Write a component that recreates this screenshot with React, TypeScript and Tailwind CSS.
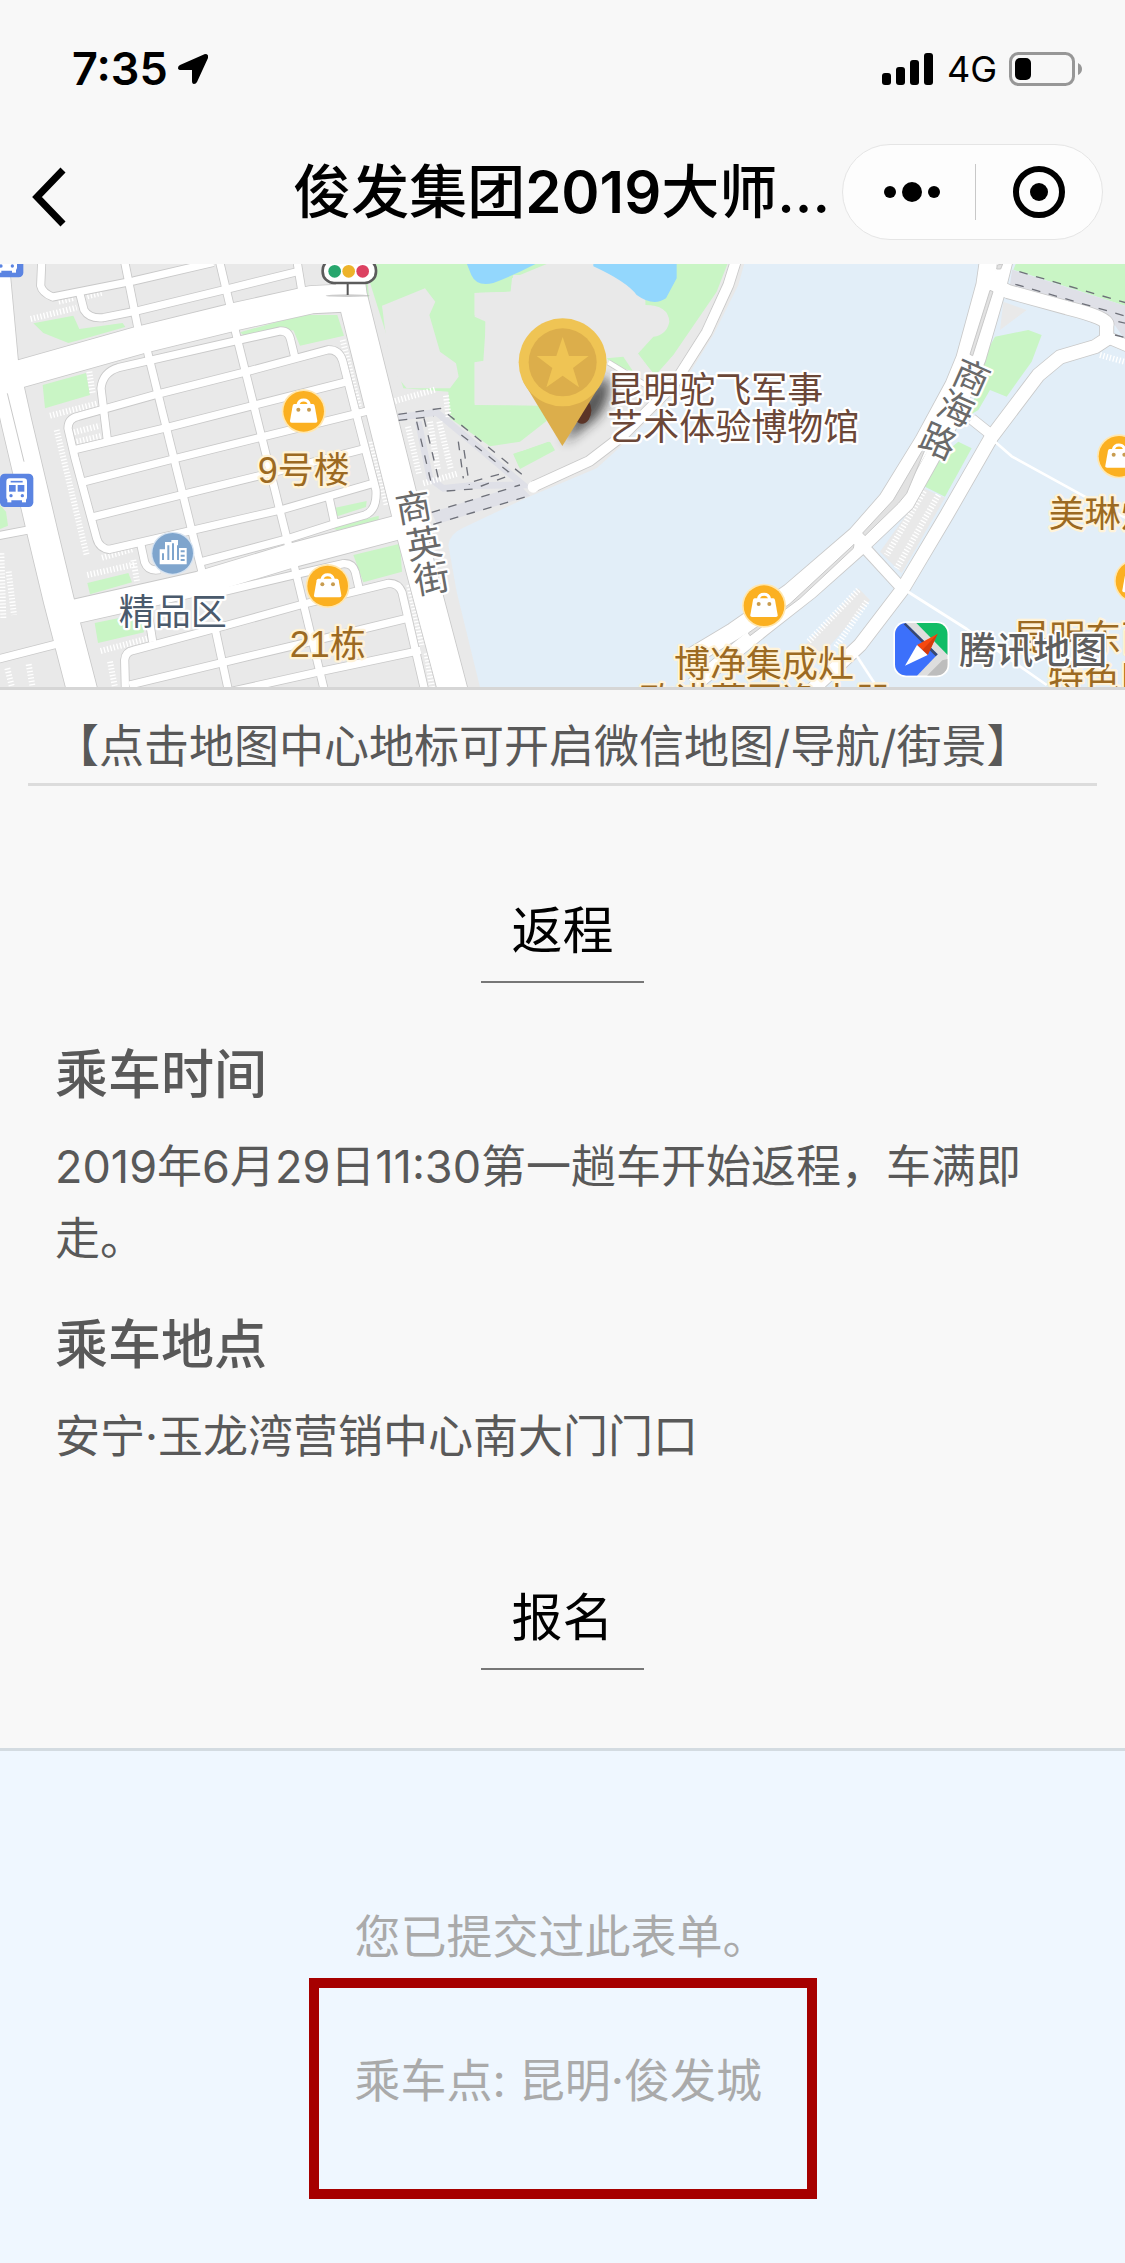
import React from 'react';

type Point = [number, number];

interface Road {
  d: string;
  width: number;
}

const SANS = 'font-[Inter,"Noto_Sans_CJK_SC",sans-serif]';
const MAP_FONT = 'font-["Liberation_Sans","Noto_Sans_CJK_SC",sans-serif]';

const roads: Road[] = [
  // small streets, upper block
  { d: 'M126 0 L122 92 Q126 112 158 126 L400 78 L640 22', width: 22 },
  { d: 'M240 118 L252 165 Q268 192 310 188 L410 168 L690 100 L900 48', width: 22 },
  { d: 'M370 0 L416 230', width: 22 },
  { d: 'M654 0 L692 160', width: 22 },
  { d: 'M888 0 L906 110', width: 22 },
  // middle block
  { d: 'M322 555 L303 400 Q308 352 355 338 L705 258 L840 228 Q866 226 872 255 L884 305', width: 22 },
  { d: 'M440 280 L606 950', width: 22 },
  { d: 'M704 220 L868 880', width: 22 },
  {
    d: 'M330 884 Q298 880 290 850 L225 610 L204 520 Q204 490 235 484 L470 418 L740 350 L985 284 Q1018 284 1028 318 L1085 540 L1128 705 Q1132 765 1095 780 L1004 806 L868 850 L606 920',
    width: 22,
  },
  { d: 'M215 586 L500 518 L765 450 L1042 380', width: 22 },
  { d: 'M245 682 L520 612 L790 545 L1110 466', width: 22 },
  { d: 'M270 788 L550 718 L820 652 L1098 580', width: 22 },
  { d: 'M325 884 L560 830 L845 764 L1120 685', width: 22 },
  { d: 'M422 866 L434 922 Q444 950 480 944', width: 22 },
  { d: 'M986 722 L1004 806', width: 22 },
  // lower block
  { d: 'M610 1024 L880 960 L1030 926 Q1058 924 1066 952 L1078 1004', width: 22 },
  { d: 'M376 1297 L374 1215 Q376 1190 400 1186 L640 1122 L900 1050 L1165 985 Q1195 984 1206 1012 L1275 1310', width: 22 },
  { d: 'M388 1290 L670 1222 L940 1158 L1230 1088', width: 22 },
  { d: 'M690 1310 L960 1250 L1262 1186', width: 22 },
  { d: 'M644 1115 L686 1310', width: 22 },
  { d: 'M882 930 L974 1310', width: 22 },
  { d: 'M446 1085 L458 1160', width: 22 },
  // left side stubs
  { d: 'M-20 845 L110 820', width: 22 },
  { d: 'M-20 1216 L190 1162', width: 22 },
  // avenues
  { d: 'M-24 -20 L-18 27 L9 320 L49 500 L128 835 L176 1035 L250 1320', width: 90 },
  { d: 'M-20 372 L65 355 L420 255 L705 185 L935 134 L1060 128', width: 82 },
  { d: 'M200 1075 L600 985 L880 900 L1240 805', width: 72 },
  { d: 'M1040 -10 L1056 120 L1148 490 L1238 850 L1362 1320', width: 88 },
  // lake side
  { d: 'M1825 322 L1940 392', width: 14 },
  { d: 'M1600 695 L1768 618 L1870 540 L2020 390 L2120 232 L2185 90 L2210 10', width: 30 },
  // east road
  { d: 'M2968 0 L2955 90 L2895 310 L2862 390 L2770 560 L2662 735 L2570 840 L2370 1012 L2200 1130 L2050 1220', width: 52 },
  { d: 'M3020 0 L2990 120 L2935 310 L2870 470 L2790 620 L2720 745 L2590 868 L2430 1010 L2290 1120 L2080 1290', width: 44 },
  {
    d: 'M2985 90 L3025 110 L3200 158 Q3330 190 3320 212 L3320 252 L3285 275 L3180 306 L3115 360 L2975 545 L2840 780 L2706 1005 L2580 1170 L2430 1310',
    width: 40,
  },
  { d: 'M3320 246 L3400 280', width: 34 },
  { d: 'M2915 492 L2975 540', width: 30 },
  { d: 'M2592 876 L2706 1000', width: 32 },
];

const thinRoads = ['M2985 560 L3035 604 L3260 728 L3400 800', 'M2720 1008 L2900 1122 L3140 1290', 'M2565 1195 L2640 1310'];

const greens = [
  'M100 205 L220 182 L238 222 L368 204 L376 216 L250 252 L205 264 L130 234 Z',
  'M128 390 L258 354 L270 420 L135 460 Z',
  'M720 232 L905 180 L1012 180 L1032 242 L900 272 L880 226 L730 240 Z',
  'M262 984 L385 954 L396 982 L270 1018 Z',
  'M284 1104 L420 1076 L432 1132 L294 1164 Z',
  'M1006 758 L1100 738 L1098 756 L1012 784 Z',
  'M1000 818 L1136 782 L1136 796 L1010 826 Z',
  'M1060 900 L1200 866 L1206 950 L1090 982 Z',
  'M0 750 L18 770 L24 812 L0 822 Z',
  // park
  'M1090 20 L2185 20 L2150 110 L2020 300 L1965 362 L1910 290 L1940 250 L1935 110 L1860 60 L1540 60 L1532 110 L1424 114 L1424 185 L1458 200 L1450 318 L1424 322 L1424 450 L1620 452 L1650 490 L1560 560 L1470 574 L1350 490 L1345 410 L1210 400 Z',
  'M1540 596 L1650 560 L1665 586 L1560 642 Z',
  // east strips
  'M2960 290 L2985 245 L3085 225 L3125 240 L3095 320 L3020 425 L2970 405 L2935 465 L2910 480 Z',
  'M2875 560 L2915 580 L2835 725 L2775 695 L2815 610 Z',
  'M3050 20 L3400 20 L3400 160 L3040 44 Z',
];

const parking = [
  'M92 192 L230 158',
  'M176 140 L225 128',
  'M262 124 L310 112',
  'M268 350 L278 415',
  'M150 482 L290 446',
  'M222 532 L300 512',
  'M230 560 L308 542',
  'M170 525 L260 900',
  'M306 908 L400 882',
  'M262 960 L405 928',
  'M400 915 L412 985',
  'M302 1188 L445 1150',
  'M330 1220 L345 1297',
  'M86 1228 L98 1297',
  'M22 1240 L36 1297',
  'M4 895 L10 1090',
  'M26 950 L42 1080',
  'M1028 255 L1080 470',
  'M1115 560 L1160 750',
  'M1228 990 L1265 1170',
  'M1280 1195 L1296 1297',
  'M1185 438 L1305 404',
  'M1338 422 L1346 486',
  'M1224 515 L1258 660',
  'M1290 500 L1314 645',
  'M1318 500 L1352 640',
  'M1270 685 L1375 655',
  'M2772 708 L2660 900',
  'M2815 720 L2690 940',
  'M2575 1005 L2425 1160',
  'M2600 1040 L2505 1180',
  'M3300 300 L3380 322',
];

const fences = [
  'M1195 478 L1322 460 L1580 670',
  'M1196 496 L1300 484',
  'M1250 500 L1295 690',
  'M1272 490 L1320 690',
  'M1375 560 L1390 670',
  'M1392 585 L1408 690',
  'M1384 540 L1525 650 L1400 685',
  'M1340 708 L1420 702 L1520 665',
  'M1295 772 L1560 690',
  'M1300 808 L1590 722',
  'M3058 50 L3400 150',
  'M3046 88 L3400 190',
  'M3355 200 L3400 210',
  'M3345 240 L3400 254',
];

const shops: Point[] = [
  [911, 469],
  [983, 993],
  [2292, 1052],
  [3357, 604],
  [3408, 978],
];

const BagIcon = ({ at }: { at: Point }) => (
  <g transform={`translate(${at[0]} ${at[1]})`}>
    <circle r="66" fill="#ffe7b0" />
    <circle r="61" fill="#fbb021" />
    <path d="M-17 -20 Q-14 -34 0 -34 Q14 -34 17 -20" fill="none" stroke="#fff" strokeWidth="9" />
    <path d="M-28 -22 H28 Q32 -22 33 -17 L41 28 Q42 34 36 34 H-36 Q-42 34 -41 28 L-33 -17 Q-32 -22 -28 -22 Z" fill="#fff" />
    <circle cx="-16" cy="-5" r="6" fill="#c89c50" />
    <circle cx="16" cy="-5" r="6" fill="#c89c50" />
  </g>
);

const BusIcon = ({ at }: { at: Point }) => (
  <g transform={`translate(${at[0]} ${at[1]})`}>
    <rect width="100" height="100" rx="14" fill="#5b84e2" />
    <rect x="19" y="14" width="62" height="66" rx="10" fill="#fff" />
    <rect x="22" y="74" width="12" height="12" fill="#fff" />
    <rect x="66" y="74" width="12" height="12" fill="#fff" />
    <path d="M32 24 H68" stroke="#5b84e2" strokeWidth="5" />
    <rect x="27" y="34" width="20" height="20" fill="#5b84e2" />
    <rect x="53" y="34" width="20" height="20" fill="#5b84e2" />
    <circle cx="33" cy="66" r="5" fill="#5b84e2" />
    <circle cx="67" cy="66" r="5" fill="#5b84e2" />
  </g>
);

const BuildingIcon = () => (
  <g transform="translate(518 895)">
    <circle r="65" fill="#d6e3f1" />
    <circle r="61" fill="#7fa5cd" />
    <path d="M-39 33 V-12 H-23 V-34 H-4 V-40 H16 V-16 H42 V33 Z" fill="#fff" />
    <path
      d="M-29 20 V0 M-13 20 V-24 M1 20 V-30 M16 20 V-24 M24 -6 H36 M24 7 H36 M24 20 H36"
      stroke="#7fa5cd"
      strokeWidth="6"
    />
  </g>
);

const TrafficLight = () => (
  <g>
    <ellipse cx="1043" cy="122" rx="66" ry="4" fill="#999" opacity="0.5" />
    <path d="M1043 84 V120" stroke="#555" strokeWidth="6" />
    <rect x="968" y="12" width="160" height="72" rx="34" fill="#fff" stroke="#5c5c5c" strokeWidth="8" />
    <circle cx="1004" cy="49" r="19" fill="#27a66d" />
    <circle cx="1046" cy="49" r="19" fill="#edb32a" />
    <circle cx="1088" cy="49" r="19" fill="#dc4161" />
  </g>
);

const MapPin = () => (
  <g>
    <defs>
      <filter id="pin-shadow" x="-50%" y="-50%" width="200%" height="200%">
        <feGaussianBlur stdDeviation="18" />
      </filter>
    </defs>
    <path d="M1692 565 L1740 440 L1815 360 Q1850 410 1790 490 Z" fill="#222" opacity="0.75" filter="url(#pin-shadow)" />
    <ellipse cx="1746" cy="466" rx="28" ry="40" fill="#5b3427" />
    <path d="M1570 380 L1687 573 L1806 380 Z" fill="#dcae4b" />
    <circle cx="1688" cy="322" r="132" fill="#efc454" />
    <circle cx="1688" cy="322" r="102" fill="#dcae4b" />
    <path
      d="M1688 246 L1707 303 L1766 303 L1719 339 L1737 397 L1688 362 L1639 397 L1657 339 L1610 303 L1669 303 Z"
      fill="#efc454"
    />
  </g>
);

const TencentLogo = () => (
  <g transform="translate(2685 1104)">
    <clipPath id="logo-clip">
      <rect width="158" height="158" rx="34" />
    </clipPath>
    <rect x="-5" y="-5" width="168" height="168" rx="38" fill="#fff" />
    <g clipPath="url(#logo-clip)">
      <rect width="158" height="158" fill="#dedede" />
      <path d="M0 0 H32 L128 94 L66 158 H0 Z" fill="#3c70fb" />
      <path d="M32 0 L128 94 L122 100 L26 4 Z" fill="#39486e" />
      <path d="M64 0 H158 V96 Z" fill="#11bd66" />
      <path d="M158 108 V158 H96 L142 112 Z" fill="#bdbdbd" />
    </g>
    <path d="M128 32 L66 66 L98 96 Z" fill="#f5480f" />
    <path d="M128 32 L82 81 L98 96 Z" fill="#d43a0c" />
    <path d="M30 128 L66 66 L98 96 Z" fill="#fff" />
  </g>
);

const MapView = () => (
  <svg
    viewBox="0 27 3375 1269"
    preserveAspectRatio="xMidYMid slice"
    className={`block h-[423px] w-full ${MAP_FONT}`}
    role="img"
    aria-label="地图"
  >
    <rect y="0" width="3375" height="1320" fill="#e9e9e9" />
    <path
      d="M1345 870 Q1350 835 1390 818 L1580 728 L1790 640 L1900 540 L2040 400 L2140 240 L2215 90 L2240 0 L3400 0 L3400 1320 L1445 1320 L1440 1297 L1370 1010 Z"
      fill="#e2eef8"
    />
    <path d="M1000 27 L1100 27 L1110 180 L1075 120 Z" fill="#c9f5c5" />
    {greens.map((d) => (
      <path key={d} d={d} fill="#c9f5c5" />
    ))}
    {/* park grounds over the lawn */}
    <path
      d="M1146 152 L1275 100 L1306 140 L1288 180 L1320 290 L1368 325 L1376 365 L1350 400 L1220 400 L1170 340 Z"
      fill="#e9e9e9"
    />
    <path
      d="M1424 114 L1532 110 L1536 70 L1640 27 L1790 27 L1900 110 L1935 150 Q2005 150 2008 200 Q2000 240 1960 245 L1910 300 L1970 365 L1820 560 L1770 600 L1590 700 L1550 690 L1545 640 L1670 580 L1660 555 L1560 590 L1640 520 L1640 450 L1424 445 L1424 322 L1456 318 L1456 195 L1424 180 Z"
      fill="#e9e9e9"
    />
    <path d="M1820 310 L1870 305 L1900 350 L1840 330 Z" fill="#c9f5c5" />
    <path d="M1540 598 L1645 560 L1665 586 L1560 642 Z" fill="#c9f5c5" />
    <path d="M1398 20 H1620 Q1540 62 1480 84 Q1430 96 1414 60 Z" fill="#93d7fd" />
    <path d="M1780 20 H2030 V70 L1998 130 Q1960 156 1910 120 Q1880 80 1780 34 Z" fill="#93d7fd" />
    {/* pedestrian area */}
    <path
      d="M1190 488 L1310 472 L1570 690 L1410 692 L1330 700 L1290 670 L1255 500"
      fill="none"
      stroke="#dfe0e7"
      strokeWidth="20"
    />
    <path d="M1295 772 L1560 690 L1590 722 L1310 808 Z" fill="#dfe0e7" />
    <path d="M3036 44 L3400 160 L3400 290 L3330 190 L3030 90 Z" fill="#dfe0e7" />
    {/* ground between the east carriageways */}
    <path d="M2770 700 L2835 728 L2705 955 L2640 890 L2740 750 Z" fill="#e9e9e9" />
    <path d="M2575 1000 L2610 1035 L2430 1240 L2340 1250 Z" fill="#e9e9e9" />
    <path d="M3010 140 L3080 165 L3000 225 Z" fill="#e9e9e9" />

    <g fill="none" stroke="#fff" strokeWidth="18" strokeDasharray="4 6">
      {parking.map((d) => (
        <path key={d} d={d} />
      ))}
    </g>
    <g fill="none" strokeLinejoin="round">
      {roads.map((road) => (
        <path key={road.d} d={road.d} stroke="#c9c9c9" strokeWidth={road.width + 5} />
      ))}
      {roads.map((road) => (
        <path key={road.d} d={road.d} stroke="#fff" strokeWidth={road.width} />
      ))}
      {thinRoads.map((d) => (
        <path key={d} d={d} stroke="#fff" strokeWidth="8" />
      ))}
    </g>
    <circle cx="1600" cy="696" r="17" fill="#fff" />
    {/* medians */}
    <g fill="#e2e2e2" stroke="#c9c9c9" strokeWidth="3">
      <path d="M2970 106 L2979 110 L2918 302 L2910 298 Z" />
      <path d="M2765 590 L2780 572 L2720 715 L2695 745 L2595 842 L2588 834 L2680 735 Z" />
      <path d="M2562 868 L2560 880 L2400 1030 L2250 1142 L2245 1134 L2370 1046 Z" />
      <path d="M2992 30 L3008 27 L3002 42 L2990 42 Z" />
      <path d="M22 415 L72 620" />
    </g>
    <g fill="none" stroke="#6e7079" strokeWidth="4" strokeDasharray="26 26">
      {fences.map((d) => (
        <path key={d} d={d} />
      ))}
    </g>

    {shops.map((at) => (
      <BagIcon key={at.join()} at={at} />
    ))}
    <BusIcon at={[0, 656]} />
    <BusIcon at={[-30, -33]} />
    <BuildingIcon />
    <TrafficLight />

    <g fontSize="108" strokeWidth="14" strokeLinejoin="round" paintOrder="stroke">
      <g fill="#9c6a22" stroke="#fff3d8">
        <text x="911" y="683" textAnchor="middle">9号楼</text>
        <text x="983" y="1207" textAnchor="middle">21栋</text>
        <text x="2022" y="1265">博净集成灶</text>
        <text x="1916" y="1378">欧诺蕾国净水器</text>
        <text x="3146" y="817">美琳灯饰</text>
        <text x="3040" y="1189">昆明东西</text>
        <text x="3144" y="1310">特色民</text>
      </g>
      <g fill="#4a5a6c" stroke="#fff">
        <text x="518" y="1109" textAnchor="middle">精品区</text>
      </g>
      <g fill="#6b4738" stroke="#fff">
        <text x="1822" y="443">昆明驼飞军事</text>
        <text x="1822" y="556">艺术体验博物馆</text>
      </g>
      <g fill="#6a6a6a" stroke="#fff" textAnchor="middle">
        <text transform="translate(1240 757) rotate(-10)" y="40">商</text>
        <text transform="translate(1272 865) rotate(-10)" y="40">英</text>
        <text transform="translate(1295 970) rotate(-10)" y="40">街</text>
        <text transform="translate(2915 366) rotate(24)" y="40">商</text>
        <text transform="translate(2868 460) rotate(24)" y="40">海</text>
        <text transform="translate(2815 558) rotate(24)" y="40">路</text>
      </g>
    </g>
    <MapPin />
    <TencentLogo />
    <text
      x="2878"
      y="1227"
      fontSize="111"
      fontWeight="500"
      fill="#5e5e5e"
      stroke="#fff"
      strokeWidth="12"
      strokeLinejoin="round"
      paintOrder="stroke"
    >
      腾讯地图
    </text>
  </svg>
);

const StatusBar = () => (
  <div className="flex h-[138px] items-start justify-between pt-[42px] pr-[42px] pl-[72px]">
    <div className="flex items-center gap-[10px]">
      <span className="text-[45px] leading-[54px] font-semibold">7:35</span>
      <svg viewBox="0 0 30 30" className="size-[30px]" aria-hidden="true">
        <path d="M27 0 Q31 0 30 4 L19 28 Q18 30 16 30 Q14 30 14 27 V16 H3 Q0 16 0 14 Q0 12 2 11 Z" />
      </svg>
    </div>
    <div className="flex h-[54px] items-center">
      <svg viewBox="0 0 51 32" className="h-[32px] w-[51px]" aria-hidden="true">
        <rect y="20" width="9" height="12" rx="3" />
        <rect x="14" y="14" width="9" height="18" rx="3" />
        <rect x="28" y="7" width="9" height="25" rx="3" />
        <rect x="42" width="9" height="32" rx="3" />
      </svg>
      <span className="ml-[14px] text-[36px] leading-[54px]">4G</span>
      <svg viewBox="0 0 74 34" className="ml-[12px] h-[34px] w-[74px]" aria-hidden="true">
        <rect x="1.5" y="1.5" width="63" height="31" rx="8" fill="none" stroke="#979797" strokeWidth="3" />
        <rect x="6" y="6" width="16" height="22" rx="5" />
        <path d="M69 11 Q73 13 73 17 Q73 21 69 23 Z" fill="#979797" />
      </svg>
    </div>
  </div>
);

const NavBar = () => (
  <header className="flex h-[126px] items-start pt-[6px] pr-[22px] pl-[24px]">
    <button type="button" aria-label="返回" className="flex h-[106px] w-[50px] items-center justify-center">
      <svg viewBox="0 0 36 60" className="h-[60px] w-[36px]" fill="none" stroke="#000" strokeWidth="7" aria-hidden="true">
        <path d="M32 3 L6 30 L32 57" />
      </svg>
    </button>
    <h1 className="min-w-0 flex-1 pr-[12px] text-right text-[58px] leading-[96px] font-medium whitespace-nowrap">
      俊发集团<span className="font-semibold">2019</span>大师...
    </h1>
    <div className="flex h-[96px] w-[261px] items-center rounded-full border border-[#e5e5e5] bg-[#fdfdfd]">
      <button type="button" aria-label="更多" className="flex h-full flex-1 items-center justify-center pl-[6px]">
        <svg viewBox="0 0 58 20" className="h-[20px] w-[58px]" aria-hidden="true">
          <circle cx="7" cy="10" r="6" />
          <circle cx="29" cy="10" r="10" />
          <circle cx="51" cy="10" r="6" />
        </svg>
      </button>
      <span className="h-[56px] w-px bg-[#c8c8c8]" />
      <button type="button" aria-label="关闭" className="flex h-full flex-1 items-center justify-center">
        <svg viewBox="0 0 52 52" className="size-[52px]" aria-hidden="true">
          <circle cx="26" cy="26" r="23" fill="none" stroke="#000" strokeWidth="6" />
          <circle cx="26" cy="26" r="9" />
        </svg>
      </button>
    </div>
  </header>
);

const SectionTitle = ({ children }: { children: React.ReactNode }) => (
  <h2 className="mx-auto w-fit border-b-2 border-[#777] px-[30px] pb-[12px] text-[51px] leading-[76px] text-black">
    {children}
  </h2>
);

const App: React.FC = () => {
  return (
    <div className={`flex min-h-screen flex-col bg-[#f8f8f8] text-black ${SANS}`} lang="zh-CN">
      <StatusBar />
      <NavBar />

      <div className="border-b-3 border-[#d6d6d6]">
        <MapView />
      </div>

      <main className="flex flex-1 flex-col">
        <p className="mx-[28px] border-b-3 border-[#dcdcdc] px-[26px] pt-[22px] pb-[1px] text-[45px] leading-[70px] text-[#595959]">
          【点击地图中心地标可开启微信地图/导航/街景】
        </p>

        <section className="pt-[107px]">
          <SectionTitle>返程</SectionTitle>
          <div className="px-[55px] pt-[54px] text-[45px] leading-[72px] text-[#595959]">
            <h3 className="text-[53px] leading-[76px] font-medium">乘车时间</h3>
            <p className="pt-[18px]">2019年6月29日11:30第一趟车开始返程，车满即走。</p>
            <h3 className="pt-[32px] text-[53px] leading-[76px] font-medium">乘车地点</h3>
            <p className="pt-[18px]">安宁·玉龙湾营销中心南大门门口</p>
          </div>
        </section>

        <section className="pt-[107px] pb-[78px]">
          <SectionTitle>报名</SectionTitle>
        </section>

        <section className="flex flex-1 flex-col items-center border-t-3 border-[#d3dbe1] bg-[#eff7ff] pt-[149px] pb-[64px] text-[46px] leading-[72px] text-[#aaa]">
          <div className="w-[508px] px-[46px]">
            <p>您已提交过此表单。</p>
          </div>
          <div className="mt-[6px] w-[508px] border-10 border-[#a60000] px-[36px] pt-[56px] pb-[73px] whitespace-nowrap">
            <p>乘车点: 昆明·俊发城</p>
          </div>
        </section>
      </main>
    </div>
  );
};

export default App;
